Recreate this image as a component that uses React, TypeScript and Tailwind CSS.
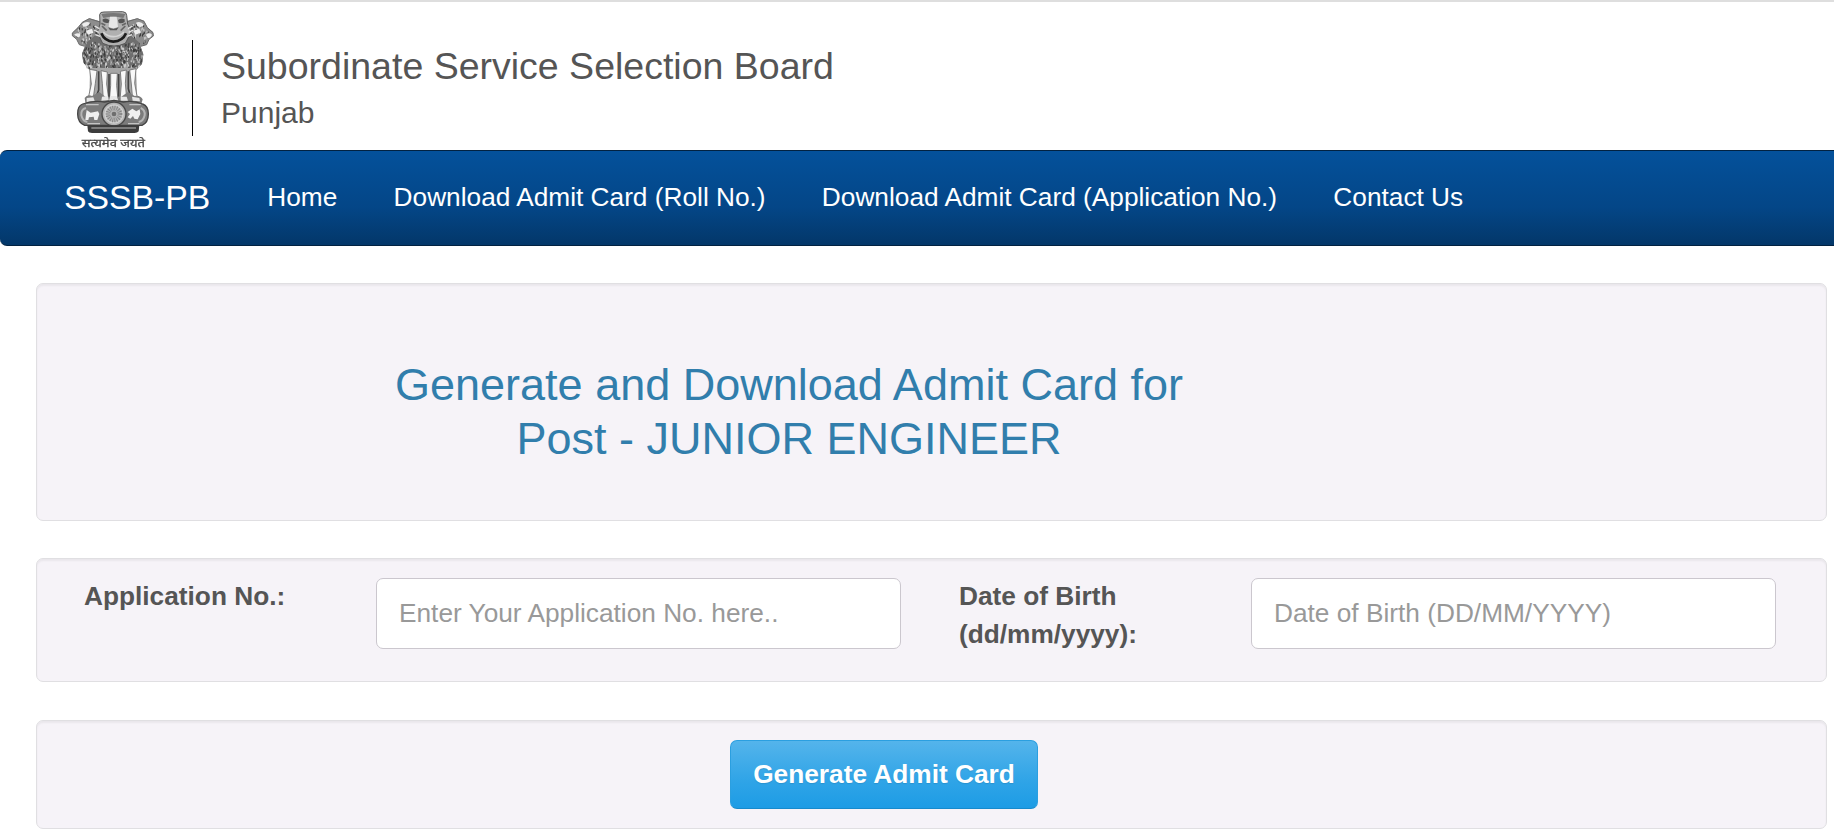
import React from "react";

const rnd = (n: number) => {
  const v = Math.sin(n * 127.1 + 11.7) * 43758.5453;
  return v - Math.floor(v);
};

type Tuft = { cx: number; cy: number; rx: number; ry: number; n: number; seed: number };

function Curls({ cx, cy, rx, ry, n, seed }: Tuft) {
  const marks = [];
  for (let i = 0; i < n; i++) {
    const a = rnd(seed + i) * Math.PI * 2;
    const r = Math.sqrt(rnd(seed + i + 500));
    const x = cx + Math.cos(a) * r * rx;
    const y = cy + Math.sin(a) * r * ry;
    const d = (rnd(seed + i + 900) - 0.5) * 10;
    marks.push(
      <path
        key={i}
        d={`M${x.toFixed(1)} ${y.toFixed(1)}q${d.toFixed(1)} 3 ${(d / 3).toFixed(1)} 7`}
        stroke={i % 5 < 2 ? "#cfcfcf" : i % 5 === 2 ? "#8f8f8f" : "#3a3a3a"}
        strokeWidth="3.2"
      />
    );
  }
  return <g fill="none">{marks}</g>;
}

function Emblem() {
  return (
    <svg className="h-[142px] w-[86px] shrink-0" viewBox="60 24 258 426" aria-label="State Emblem of India">
      <g className="blur-[0.35px]">
        {/* side lions */}
        <path d="M150 64L118 55L97 66L84 82L67 98L66 107L80 118L88 134L104 139L96 164L100 188L116 207L150 215L180 190L176 90Z" fill="#8d8d8d" />
        <path d="M228 64L262 55L282 62L292 82L309 96L311 108L297 118L290 134L272 139L280 164L276 192L262 207L236 218L200 190L204 90Z" fill="#8d8d8d" />
        <path d="M150 66L118 56L97 67L84 83L67 99L67 107L80 118L88 134L104 139M228 66L262 56L282 64L292 83L309 98L310 108L297 118L290 134L272 139" fill="none" stroke="#6a6a6a" strokeWidth="3" />
        <Curls cx={112} cy={98} rx={32} ry={32} n={70} seed={10} />
        <Curls cx={266} cy={98} rx={32} ry={32} n={70} seed={210} />
        <path d="M96 72q12-10 24-4q-4 12-20 12zM258 68q14-6 24 6q-8 12-20 4zM72 104q8-8 18-2q2 10-6 10zM288 104q10-8 18 0q-4 10-12 10zM108 92l18-6 4 12-16 6zM250 92l18-6 4 12-16 6z" fill="#ededed" />
        {/* chest and mane */}
        <path d="M112 126L148 96L230 96L266 126L280 162L276 192L254 212L232 208L210 220L190 226L168 218L146 210L122 212L100 186L96 160Z" fill="#6e6e6e" />
        <Curls cx={134} cy={166} rx={34} ry={42} n={130} seed={400} />
        <Curls cx={244} cy={166} rx={34} ry={42} n={130} seed={700} />
        <Curls cx={190} cy={172} rx={38} ry={46} n={130} seed={1000} />
        {/* front head */}
        <path d="M149 44Q150 35 162 36L218 35Q230 36 230 46L233 72L244 96L226 130Q192 146 158 130L142 98L150 72Z" fill="#b0b0b0" stroke="#555" strokeWidth="3" />
        <path d="M154 42Q190 36 226 42L220 54Q190 46 160 54Z" fill="#777" />
        <path d="M180 50L200 50L204 80L190 86L176 80Z" fill="#e6e6e6" />
        <path d="M158 58q10-6 20 2l-2 8q-10 4-18-4zM204 60q10-8 20-2l0 8q-10 6-18 2z" fill="#555" />
        <path d="M174 82q16 8 32 0l-6 9h-20z" fill="#555" />
        <path d="M156 78l14 14M226 78l-14 14M154 70l12 6M228 70l-12 6" stroke="#666" strokeWidth="5" />
        <path d="M160 96q12 14 30 14t32-14" fill="none" stroke="#d4d4d4" strokeWidth="5" />
        <path d="M154 100Q164 124 190 125Q218 124 228 100" fill="none" stroke="#1d1d1d" strokeWidth="8" />
        <path d="M134 78l14 8M132 90l14 7M136 104l14 5M248 78l-14 8M250 90l-14 7M246 104l-14 5" stroke="#e4e4e4" strokeWidth="4" />
        {/* legs */}
        <path d="M120 204L258 204L262 300L118 300Z" fill="#a6a6a6" />
        <path d="M119 208L141 212L136 250L130 292L114 298L124 252ZM153 212L172 216L170 252L176 296L160 300L157 250ZM182 220L202 220L200 256L204 302L178 302L182 256ZM211 214L229 210L226 250L230 296L210 300L214 252ZM239 210L258 206L254 250L262 294L248 298L244 252Z" fill="#f8f8f8" stroke="#6c6c6c" strokeWidth="2.5" />
        <path d="M146 214V270L138 292M177 222V290M206 222V290M235 214V266L242 292" stroke="#444" strokeWidth="5" fill="none" />
        {/* abacus */}
        <path d="M104 294Q112 282 126 288L148 276L168 292H212L234 276L254 288Q270 284 278 298L272 320H108Z" fill="#7c7c7c" />
        <path d="M110 294l20-2 4 10-24 4zM156 290l18-2 2 12-22 2zM181 288h19l5 14h-28zM212 290l18 0 4 12-22 0zM246 290l22 4 2 10-22-2z" fill="#e6e6e6" />
        <path d="M98 312Q82 318 83 342Q83 368 104 376H276Q295 368 295 342Q295 318 278 312Q250 300 220 306L192 301L164 306Q130 300 98 312Z" fill="#7b7b7b" stroke="#444" strokeWidth="4" />
        <path d="M108 324Q92 328 94 346Q98 364 112 366M272 324Q286 330 284 346Q280 364 266 366" fill="none" stroke="#b5b5b5" strokeWidth="6" />
        <path d="M110 330l12 8 22-4 4 8-6 18h-9l-2-10-14 2-2 8h-9l2-17zM233 336l14-10 12 8 10-6 2 14-8 16-10-2-4-8-8 8-8-4 7-10z" fill="#f0f0f0" />
        <path d="M108 314h38M238 314h34M112 371h38M234 371h34" stroke="#c4c4c4" strokeWidth="4" />
        <circle cx="192" cy="342" r="36" fill="#b4b4b4" stroke="#484848" strokeWidth="4" />
        <circle cx="192" cy="342" r="27" fill="none" stroke="#cfcfcf" strokeWidth="5" />
        <circle cx="192" cy="342" r="18" fill="none" stroke="#858585" strokeWidth="14" strokeDasharray="2.5 3.5" />
        <circle cx="192" cy="342" r="7" fill="#6e6e6e" />
        <path d="M112 376H268L266 394Q262 399 254 399H126Q116 399 114 394Z" fill="#3c3c3c" />
        <path d="M124 384H258" stroke="#7e7e7e" strokeWidth="6" />
        <text x="190" y="442" textAnchor="middle" textLength="190" lengthAdjust="spacingAndGlyphs" fontSize="31" fill="#4a4a4a" stroke="#4a4a4a" strokeWidth="0.8" fontFamily="'Noto Sans Devanagari', 'Noto Sans', sans-serif">
          सत्यमेव जयते
        </text>
      </g>
    </svg>
  );
}

const links = ["Home", "Download Admit Card (Roll No.)", "Download Admit Card (Application No.)", "Contact Us"];

const well =
  "rounded-[7px] border border-[#e0dfe2] bg-[#f6f3f8] shadow-[inset_0_2px_2px_rgba(0,0,0,0.05)]";
const field =
  "h-[71px] w-[525px] shrink-0 rounded-[7px] border border-[#cbc7ce] bg-white px-[22px] text-[26.25px] text-[#555] outline-none placeholder:text-[#999] placeholder:opacity-100";

export default function App() {
  return (
    <div className="h-[834px] w-[1834px] overflow-hidden bg-white font-['Liberation_Sans',Arial,sans-serif] text-[26.25px] leading-[37.5px] text-[#555]">
      <header className="flex h-[150px] border-t-2 border-[#dedede] pl-[70px]">
        <div className="mt-[6px]">
          <Emblem />
        </div>
        <div className="mt-[38px] ml-[36px] h-[96px] border-l border-black pl-[28px]">
          <h1 className="mt-[5px] text-[37.5px] leading-[42px]">Subordinate Service Selection Board</h1>
          <p className="mt-[9px] text-[30px] leading-[34px]">Punjab</p>
        </div>
      </header>

      <nav className="flex h-[96px] items-center rounded-l-[7px] border-y border-[#022241] bg-[linear-gradient(#04519b,#044687_60%,#033769)] pl-[64px] text-white">
        <a className="pb-[3px] text-[33.75px] leading-[38px]">SSSB-PB</a>
        <ul className="ml-[57px] flex gap-[56.25px]">
          {links.map((l) => (
            <li key={l} className="whitespace-nowrap">
              {l}
            </li>
          ))}
        </ul>
      </nav>

      <main className="flex flex-col pt-[37px] pr-[7px] pl-[36px]">
        <section className={`${well} h-[238px] pt-[74px]`}>
          <h2 className="ml-[352px] w-[800px] text-center text-[45px] leading-[54px] text-[#317eac]">
            Generate and Download Admit Card for
            <br />
            Post - JUNIOR ENGINEER
          </h2>
        </section>

        <section className={`${well} mt-[37px] flex h-[124px] items-start pt-[19px] pl-[47px]`}>
          <label className="w-[292px] shrink-0 font-bold">Application No.:</label>
          <input className={field} placeholder="Enter Your Application No. here.." />
          <label className="ml-[58px] w-[292px] shrink-0 font-bold">
            Date of Birth
            <br />
            (dd/mm/yyyy):
          </label>
          <input className={field} placeholder="Date of Birth (DD/MM/YYYY)" />
        </section>

        <section className={`${well} mt-[38px] h-[109px] pt-[19px] pl-[693px]`}>
          <button className="h-[69px] w-[308px] rounded-[7px] border border-[#2b9fe0] border-b-[#178acc] bg-[linear-gradient(#54b4eb,#2fa4e7_60%,#1d9ce5)] font-bold text-white [text-shadow:0_1px_1px_rgba(0,0,0,0.1)]">
            Generate Admit Card
          </button>
        </section>
      </main>
    </div>
  );
}
